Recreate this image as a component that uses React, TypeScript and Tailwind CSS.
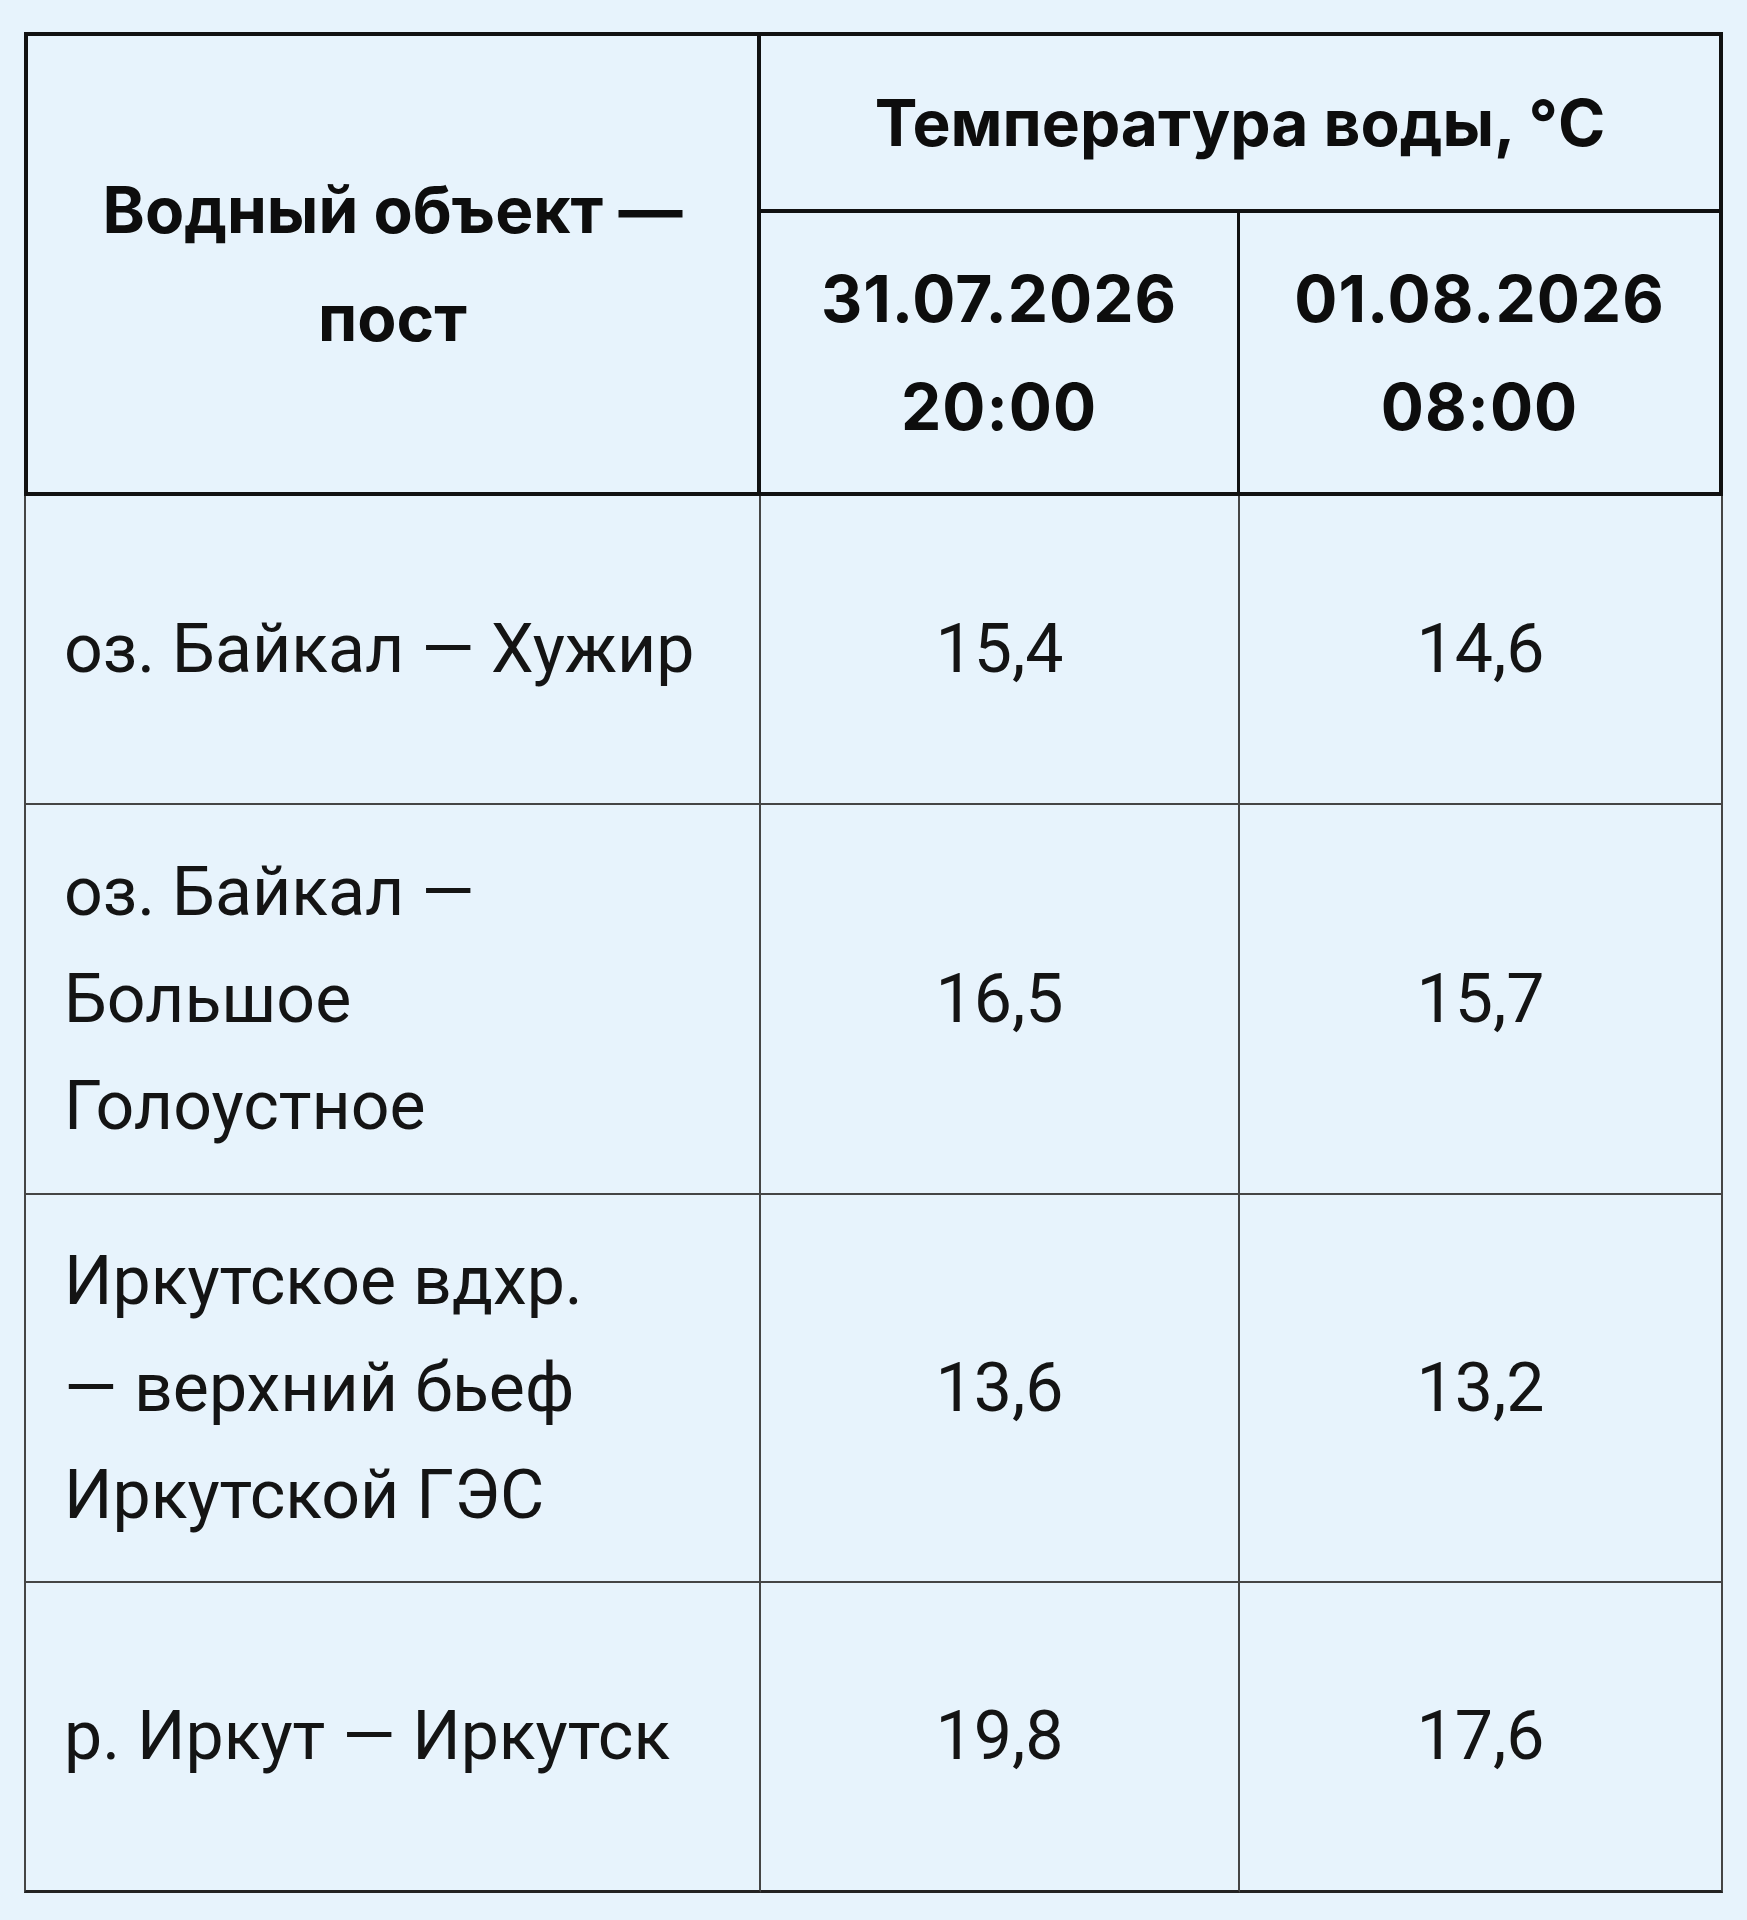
import React from "react";

type Row = {
  name: string[];
  a: string;
  b: string;
  h: string;
  last?: boolean;
};

const rows: Row[] = [
  { name: ["оз. Байкал — Хужир"], a: "15,4", b: "14,6", h: "h-[309px]" },
  {
    name: ["оз. Байкал —", "Большое", "Голоустное"],
    a: "16,5",
    b: "15,7",
    h: "h-[390px]",
  },
  {
    name: ["Иркутское вдхр.", "— верхний бьеф", "Иркутской ГЭС"],
    a: "13,6",
    b: "13,2",
    h: "h-[388px]",
  },
  {
    name: ["р. Иркут — Иркутск"],
    a: "19,8",
    b: "17,6",
    h: "h-[310px]",
    last: true,
  },
];

const head = "font-['Inter',sans-serif] font-bold text-[64px] leading-[108px] text-[#0d0d0d]";
const body = "font-['Roboto',sans-serif] text-[68px] leading-[107px] text-[#141414]";

export default function App() {
  return (
    <div className="min-h-[1920px] w-full bg-[#e7f3fc] pl-[24px] pt-[32px]">
      <div className="grid w-[1699px] grid-cols-[737px_479px_483px]">
        {/* шапка */}
        <div className="row-span-2 flex h-[464px] items-center justify-center border-4 border-[#111]">
          <div className={`${head} text-center`}>
            Водный объект —
            <br />
            пост
          </div>
        </div>
        <div className="col-span-2 flex h-[181px] items-center justify-center border-y-4 border-r-4 border-[#111]">
          <div className={head}>Температура воды, °C</div>
        </div>
        <div className="flex h-[283px] items-center justify-center border-b-4 border-r-[3px] border-[#111]">
          <div className={`${head} text-center tracking-[1px]`}>
            31.07.2026
            <br />
            20:00
          </div>
        </div>
        <div className="flex h-[283px] items-center justify-center border-b-4 border-r-4 border-[#111]">
          <div className={`${head} text-center tracking-[1px]`}>
            01.08.2026
            <br />
            08:00
          </div>
        </div>

        {/* строки */}
        {rows.map((r, i) => (
          <React.Fragment key={i}>
            <div
              className={`${r.h} flex items-center border-x-2 border-[#454545] pl-[38px] ${
                r.last ? "border-b-[3px] border-b-[#222]" : "border-b-2"
              }`}
            >
              <div className={body}>
                {r.name.map((l, j) => (
                  <div key={j}>{l}</div>
                ))}
              </div>
            </div>
            <div
              className={`${r.h} flex items-center justify-center border-r-2 border-[#454545] ${
                r.last ? "border-b-[3px] border-b-[#222]" : "border-b-2"
              }`}
            >
              <span className={body}>{r.a}</span>
            </div>
            <div
              className={`${r.h} flex items-center justify-center border-r-2 border-[#454545] ${
                r.last ? "border-b-[3px] border-b-[#222]" : "border-b-2"
              }`}
            >
              <span className={body}>{r.b}</span>
            </div>
          </React.Fragment>
        ))}
      </div>
    </div>
  );
}
